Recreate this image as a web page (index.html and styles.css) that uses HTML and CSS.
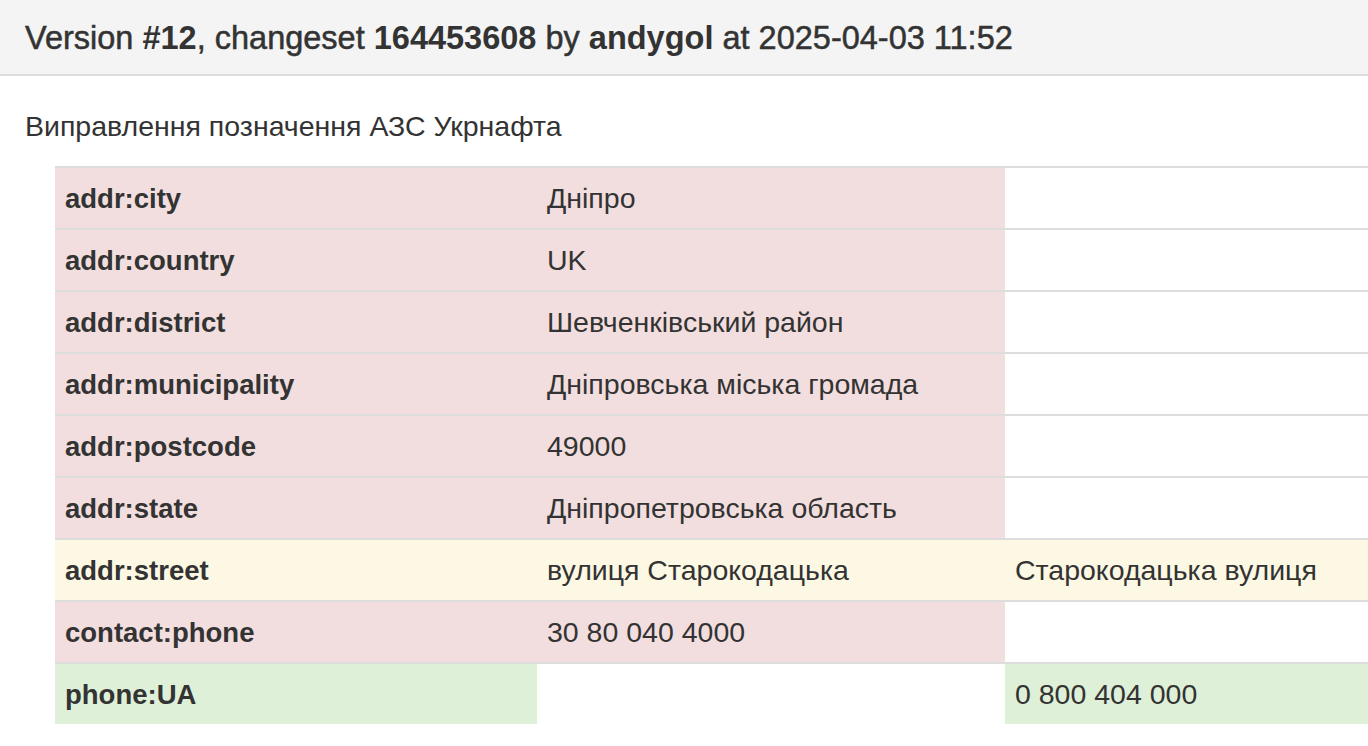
FILE: index.html
```html
<!DOCTYPE html>
<html lang="uk">
<head>
<meta charset="utf-8">
<title>Version #12</title>
<link rel="stylesheet" href="styles.css">
</head>
<body>
<div class="panel">
  <div class="panel-heading">
    <h3 class="panel-title">Version <strong>#12</strong>, changeset <strong>164453608</strong> by <strong>andygol</strong> at 2025-04-03 11:52</h3>
  </div>
  <div class="panel-body">
    <p class="comment">Виправлення позначення АЗС Укрнафта</p>
    <table class="tags">
      <colgroup><col class="c-key"><col class="c-old"><col class="c-new"></colgroup>
      <tbody>
        <tr class="removed"><th>addr:city</th><td class="old">Дніпро</td><td class="new"></td></tr>
        <tr class="removed"><th>addr:country</th><td class="old">UK</td><td class="new"></td></tr>
        <tr class="removed"><th>addr:district</th><td class="old">Шевченківський район</td><td class="new"></td></tr>
        <tr class="removed"><th>addr:municipality</th><td class="old">Дніпровська міська громада</td><td class="new"></td></tr>
        <tr class="removed"><th>addr:postcode</th><td class="old">49000</td><td class="new"></td></tr>
        <tr class="removed"><th>addr:state</th><td class="old">Дніпропетровська область</td><td class="new"></td></tr>
        <tr class="changed"><th>addr:street</th><td class="old">вулиця Старокодацька</td><td class="new">Старокодацька вулиця</td></tr>
        <tr class="removed"><th>contact:phone</th><td class="old">30 80 040 4000</td><td class="new"></td></tr>
        <tr class="added"><th>phone:UA</th><td class="old"></td><td class="new">0 800 404 000</td></tr>
      </tbody>
    </table>
  </div>
</div>
</body>
</html>
```

FILE: styles.css
```css
html, body {
  margin: 0;
  padding: 0;
  background: #ffffff;
}

body {
  font-family: "Liberation Sans", Arial, Helvetica, sans-serif;
  color: #333333;
  font-size: 28.5px;
  line-height: 34px;
  overflow: hidden;
}

.panel-heading {
  background: #f4f4f4;
  border-bottom: 2px solid #dddddd;
  padding: 20px 25px 18px;
}

.panel-title {
  margin: 0;
  font-size: 32.5px;
  line-height: 36px;
  font-weight: normal;
  color: #333333;
  -webkit-text-stroke: 0.5px #333333;
}

.panel-title strong {
  font-weight: bold;
  -webkit-text-stroke: 0;
}

.panel-body {
  padding: 33px 0 0 25px;
}

.comment {
  margin: 0 0 23px 0;
}

.tags {
  margin-left: 30px;
  width: calc(100% - 30px);
  border-collapse: collapse;
  table-layout: fixed;
}

.c-key { width: 482px; }
.c-old { width: 468px; }

.tags th,
.tags td {
  text-align: left;
  vertical-align: top;
  padding: 13px 10px;
  border-top: 2px solid #dddddd;
  height: 34px;
  white-space: nowrap;
}

.tags th {
  font-weight: bold;
  font-size: 27.5px;
  padding-top: 14px;
  padding-bottom: 12px;
}

.removed th,
.removed .old {
  background: #f2dede;
}

.changed th,
.changed td {
  background: #fcf8e3;
}

.added th,
.added .new {
  background: #dff0d8;
}
```
